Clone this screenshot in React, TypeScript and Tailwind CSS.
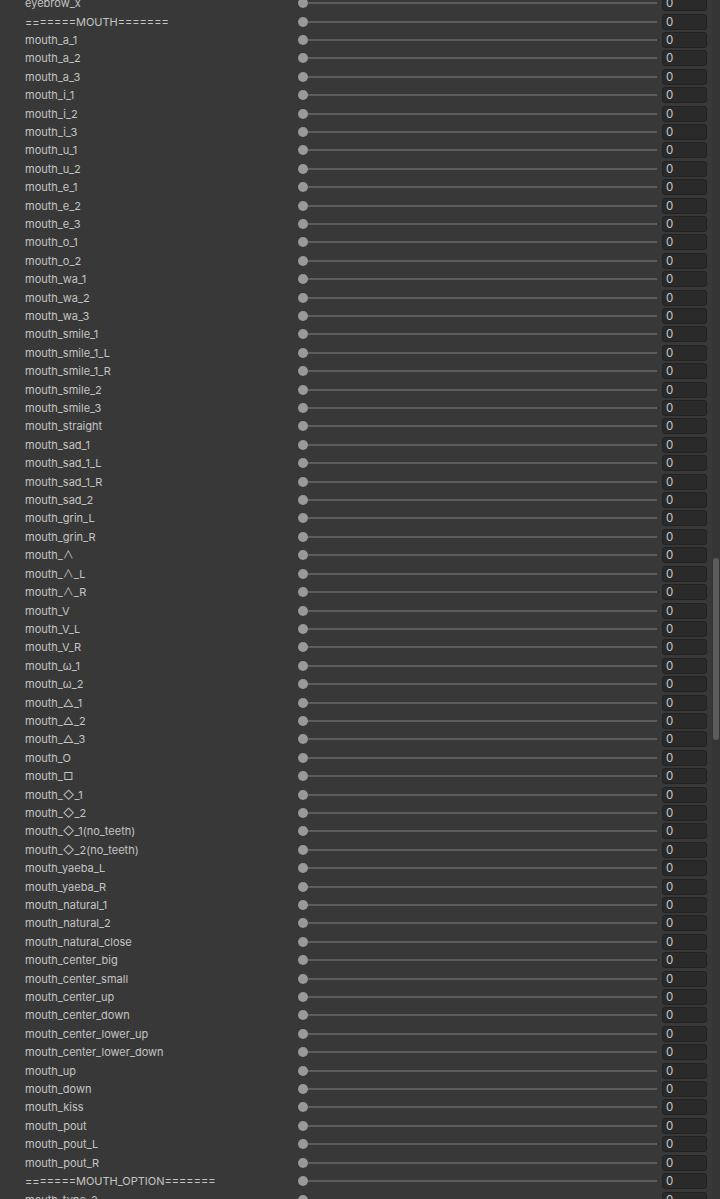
import React from "react";

const labels = [
  "eyebrow_x",
  "=======MOUTH=======",
  "mouth_a_1",
  "mouth_a_2",
  "mouth_a_3",
  "mouth_i_1",
  "mouth_i_2",
  "mouth_i_3",
  "mouth_u_1",
  "mouth_u_2",
  "mouth_e_1",
  "mouth_e_2",
  "mouth_e_3",
  "mouth_o_1",
  "mouth_o_2",
  "mouth_wa_1",
  "mouth_wa_2",
  "mouth_wa_3",
  "mouth_smile_1",
  "mouth_smile_1_L",
  "mouth_smile_1_R",
  "mouth_smile_2",
  "mouth_smile_3",
  "mouth_straight",
  "mouth_sad_1",
  "mouth_sad_1_L",
  "mouth_sad_1_R",
  "mouth_sad_2",
  "mouth_grin_L",
  "mouth_grin_R",
  "mouth_∧",
  "mouth_∧_L",
  "mouth_∧_R",
  "mouth_V",
  "mouth_V_L",
  "mouth_V_R",
  "mouth_ω_1",
  "mouth_ω_2",
  "mouth_△_1",
  "mouth_△_2",
  "mouth_△_3",
  "mouth_O",
  "mouth_□",
  "mouth_◇_1",
  "mouth_◇_2",
  "mouth_◇_1(no_teeth)",
  "mouth_◇_2(no_teeth)",
  "mouth_yaeba_L",
  "mouth_yaeba_R",
  "mouth_natural_1",
  "mouth_natural_2",
  "mouth_natural_close",
  "mouth_center_big",
  "mouth_center_small",
  "mouth_center_up",
  "mouth_center_down",
  "mouth_center_lower_up",
  "mouth_center_lower_down",
  "mouth_up",
  "mouth_down",
  "mouth_kiss",
  "mouth_pout",
  "mouth_pout_L",
  "mouth_pout_R",
  "=======MOUTH_OPTION=======",
  "mouth_type_2",
];

function Row({ label }: { label: string }) {
  return (
    <div className="flex h-[18.41px] items-center">
      <div className="w-[298px] shrink-0 whitespace-nowrap pl-[25px] text-[11px] leading-[14px] text-[#c4c4c4]">
        {label}
      </div>
      <div className="flex flex-1 items-center">
        <div className="relative z-10 h-[10px] w-[10px] shrink-0 rounded-full bg-[#999999]" />
        <div className="-ml-[2px] h-[2px] flex-1 bg-[#5d5d5d]" />
      </div>
      <div className="ml-[5px] mr-[13px] flex h-[16px] w-[45px] shrink-0 items-center rounded-[3px] border border-[#222222] bg-[#2a2a2a] pl-[3px] text-[11.5px] leading-[14px] text-[#c8c8c8]">
        0
      </div>
    </div>
  );
}

export default function App() {
  return (
    <div
      className="relative h-[1199px] w-[720px] overflow-hidden bg-[#383838]"
      style={{ fontFamily: "Inter, 'Noto Sans', 'Noto Sans CJK JP', sans-serif" }}
    >
      <div className="-mt-[6.1px]">
        {labels.map((l, i) => (
          <Row key={i} label={l} />
        ))}
      </div>
      <div className="absolute right-0 top-0 h-full w-[8px] bg-[#353535]">
        <div className="absolute left-[1px] top-[558px] h-[182px] w-[6px] rounded-[3px] bg-[#5c5c5c]" />
      </div>
    </div>
  );
}
